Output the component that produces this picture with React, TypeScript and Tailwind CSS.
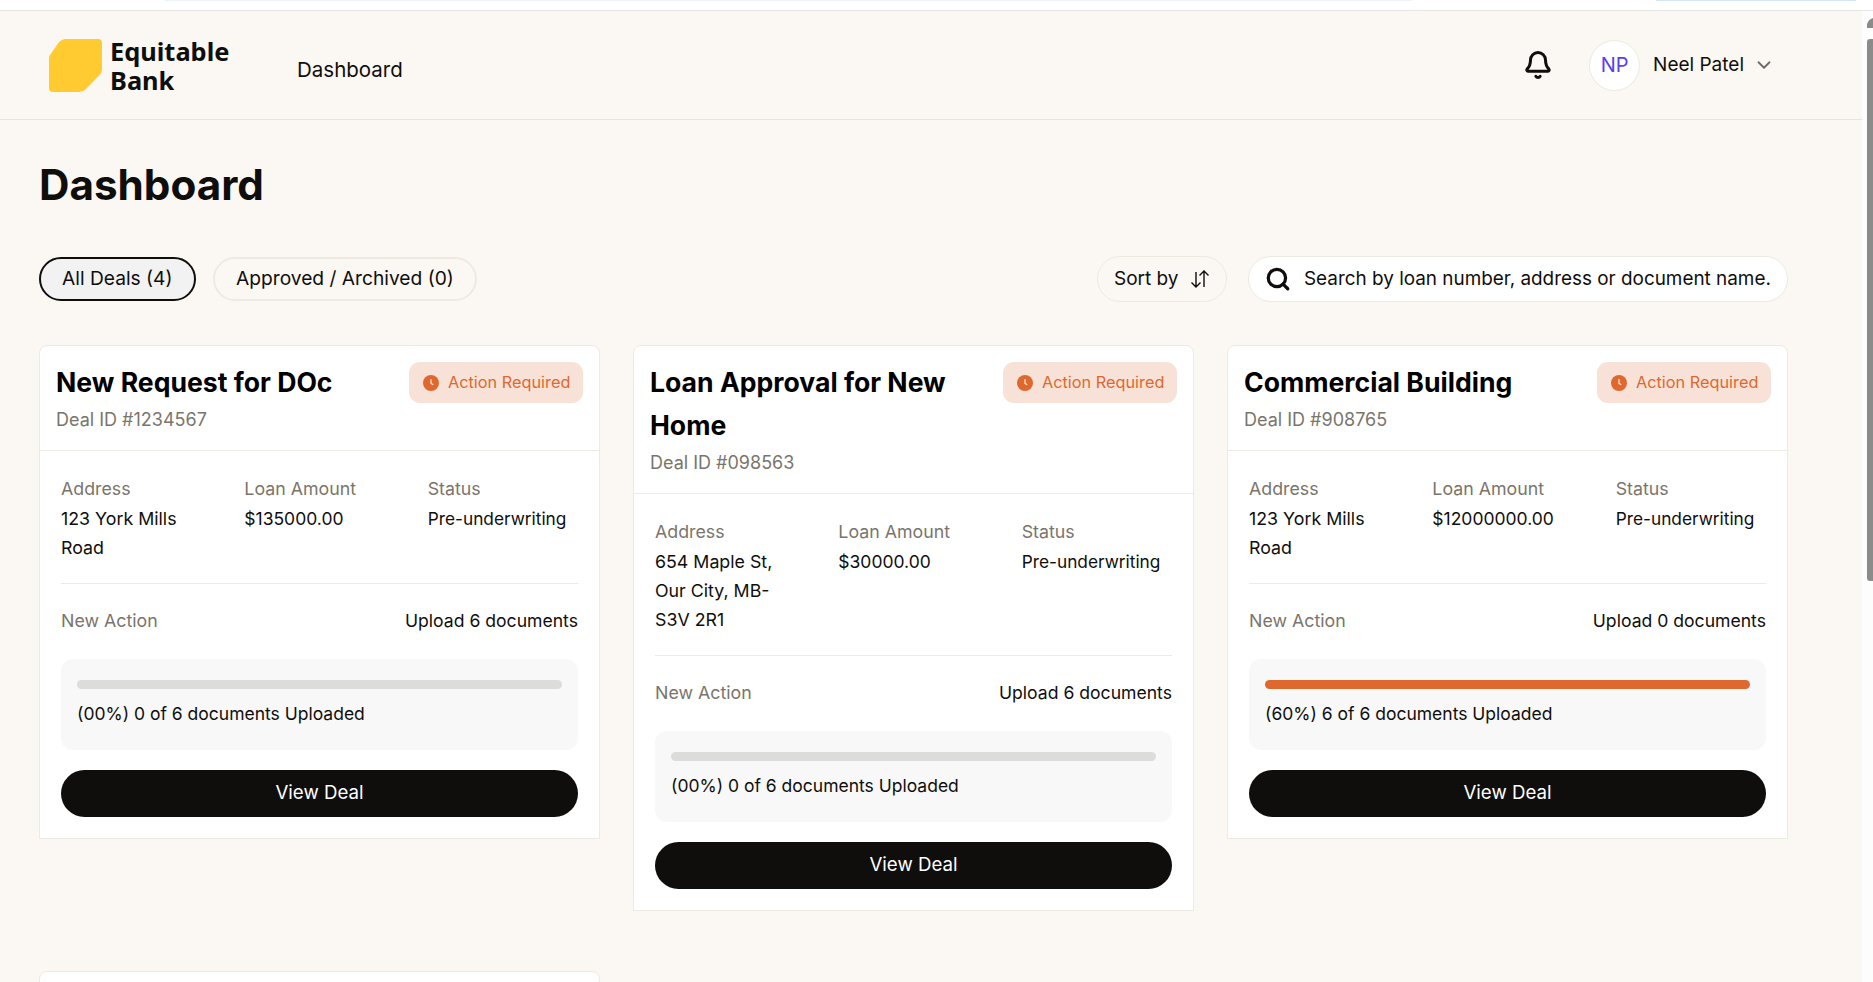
import { Bell, ChevronDown, Search } from "lucide-react";

const font = "font-['Inter',sans-serif]";

const deals = [
  {
    title: "New Request for DOc",
    id: "Deal ID #1234567",
    address: "123 York Mills Road",
    amount: "$135000.00",
    action: "Upload 6 documents",
    percent: "(00%) 0 of 6 documents Uploaded",
    done: false,
  },
  {
    title: "Loan Approval for New Home",
    id: "Deal ID #098563",
    address: "654 Maple St, Our City, MB-S3V 2R1",
    amount: "$30000.00",
    action: "Upload 6 documents",
    percent: "(00%) 0 of 6 documents Uploaded",
    done: false,
  },
  {
    title: "Commercial Building",
    id: "Deal ID #908765",
    address: "123 York Mills Road",
    amount: "$12000000.00",
    action: "Upload 0 documents",
    percent: "(60%) 6 of 6 documents Uploaded",
    done: true,
  },
];

function ClockDot() {
  return (
    <svg viewBox="0 0 16 16" className="h-4 w-4 shrink-0">
      <circle cx="8" cy="8" r="8" fill="#DF682F" />
      <path d="M8 4v4.4l2.2 1.4" fill="none" stroke="#F8E2D7" strokeWidth="1.3" />
    </svg>
  );
}

function SortIcon() {
  return (
    <svg viewBox="0 0 24 24" className="h-[24px] w-[24px]" fill="none" stroke="#0f0e0c" strokeWidth="1.4">
      <path d="M8 5v15M3.5 15.5 8 20l4.5-4.5" />
      <path d="M16 20V4M11.500 8.500 16 4l4.500 4.500" />
    </svg>
  );
}

function DealCard({ deal }: { deal: (typeof deals)[number] }) {
  return (
    <div className="rounded-t-[8px] border border-[#EDEAE2] bg-white">
      <div className="flex items-start justify-between border-b border-[#EDEAE2] p-[16px]">
        <div className="w-[330px]">
          <div className="-mt-[1px] text-[26.600px] font-bold leading-[43px] text-black">{deal.title}</div>
          <div className="mt-[2px] text-[18px] leading-[28px] text-[#7a756c]">{deal.id}</div>
        </div>
        <div className="flex h-[41px] w-[174px] shrink-0 items-center gap-[9px] rounded-[11px] bg-[#F8E2D7] pl-[14px]">
          <ClockDot />
          <span className="text-[16.3px] text-[#DF682F]">Action Required</span>
        </div>
      </div>
      <div className="px-[21px] pb-[21px] pt-[23px]">
        <div className="grid grid-cols-3 gap-x-[33px] border-b border-[#EDEAE2] pb-[21px]">
          <div className="pr-[8px]">
            <div className="text-[17.8px] leading-[30px] text-[#7a756c]">Address</div>
            <div className="text-[17.8px] leading-[29px] text-[#0f0e0c]">{deal.address}</div>
          </div>
          <div>
            <div className="text-[17.8px] leading-[30px] text-[#7a756c]">Loan Amount</div>
            <div className="text-[17.5px] leading-[29px] text-[#0f0e0c]">{deal.amount}</div>
          </div>
          <div>
            <div className="text-[17.8px] leading-[30px] text-[#7a756c]">Status</div>
            <div className="text-[17.3px] leading-[29px] text-[#0f0e0c]">Pre-underwriting</div>
          </div>
        </div>
        <div className="flex items-center justify-between pb-[24px] pt-[22px] leading-[29px]">
          <span className="text-[17.8px] text-[#7a756c]">New Action</span>
          <span className="text-[17.6px] text-[#0f0e0c]">{deal.action}</span>
        </div>
        <div className="rounded-[12px] bg-[#F8F8F8] px-[16px] pb-[22px] pt-[21px]">
          <div className={`h-[9px] rounded-full ${deal.done ? "bg-[#DF682F]" : "bg-[#DCDCDA]"}`} />
          <div className="mt-[10px] text-[17.5px] leading-[29px] text-[#0f0e0c]">{deal.percent}</div>
        </div>
        <button className="mt-[20px] h-[47px] w-full rounded-full bg-[#0f0e0c] text-[18.7px] text-white">View Deal</button>
      </div>
    </div>
  );
}

export default function App() {
  return (
    <div className={`${font} flex h-[982px] flex-col overflow-hidden bg-white text-[#0f0e0c]`}>
      <div className="flex h-[11px] shrink-0 items-start border-b border-[#E5E5E5] bg-white">
        <div className="ml-[165px] h-[1px] w-[1247px] bg-[#EEF3FB]" />
        <div className="ml-[244px] h-[1px] w-[200px] bg-[#D5E4FB]" />
      </div>
      <div className="flex min-h-0 flex-1">
        <div className="min-w-0 flex-1 overflow-hidden bg-[#FBF8F3]">
          <header className="flex h-[109px] items-center justify-between border-b border-[#E5E5E5] pl-[49px] pr-[87px]">
            <div className="flex items-center">
              <svg viewBox="0 0 53 53" className="h-[53px] w-[53px]">
                <path d="M16 0H49a4 4 0 0 1 4 4V30a8 8 0 0 1-2.5 6L37 50a10 10 0 0 1-7 3H4a4 4 0 0 1-4-4V20a8 8 0 0 1 2.5-6L10 3a10 10 0 0 1 6-3Z" fill="#FFCB30" />
              </svg>
              <div className="ml-[8px] mt-[2px] w-[130px] font-['Noto_Sans',sans-serif] text-[25.4px] font-bold leading-[29px]">Equitable Bank</div>
              <div className="ml-[57px] mt-[10px] text-[20.5px]">Dashboard</div>
            </div>
            <div className="flex items-center">
              <Bell className="h-[30px] w-[30px]" strokeWidth={2.4} />
              <div className="ml-[36px] flex h-[51px] w-[51px] items-center justify-center rounded-full border border-[#EDEAE2] bg-white text-[20px] text-[#5B3FEF]">NP</div>
              <span className="ml-[13px] text-[19px]">Neel Patel</span>
              <ChevronDown className="ml-[9px] h-[22px] w-[22px] text-[#6b6b6b]" strokeWidth={2} />
            </div>
          </header>
          <main className="pl-[39px] pr-[74px]">
            <h1 className="mt-[38px] text-[42.2px] font-bold leading-[54px]">Dashboard</h1>
            <div className="mt-[44px] flex items-center justify-between">
              <div className="flex gap-[17px]">
                <div className="flex h-[44px] items-center rounded-full border-2 border-[#0f0e0c] bg-[#F2F2F2] px-[21px] pb-[2px] text-[19.2px]">All Deals (4)</div>
                <div className="flex h-[44px] items-center rounded-full border-2 border-[#EDEAE2] px-[21.5px] pb-[2px] text-[19.2px]">Approved / Archived (0)</div>
              </div>
              <div className="flex gap-[21px]">
                <div className="flex h-[46px] w-[130px] items-center gap-[9px] rounded-full border border-[#EDEAE2] pl-[16px] text-[19px]">
                  Sort by
                  <SortIcon />
                </div>
                <div className="flex h-[46px] w-[540px] items-center rounded-full border border-[#EDEAE2] bg-white pl-[16px] text-[18.9px]">
                  <Search className="h-[26px] w-[26px]" strokeWidth={3} />
                  <span className="ml-[13px]">Search by loan number, address or document name.</span>
                </div>
              </div>
            </div>
            <div className="mt-[43px] grid grid-cols-3 items-start gap-x-[33px] gap-y-[60px]">
              {deals.map((deal) => (
                <DealCard key={deal.id} deal={deal} />
              ))}
              <div className="h-[60px] rounded-t-[8px] border border-[#EDEAE2] bg-white" />
            </div>
          </main>
        </div>
        <div className="flex w-[11px] shrink-0 flex-col bg-[#FDFDFD] pl-[5px]">
          <svg viewBox="0 0 6 10" className="mt-[7px] h-[10px] w-[6px] shrink-0">
            <path d="M6 0V10H0V6Q1.500 1.500 6 0Z" fill="#8B8B8B" />
          </svg>
          <div className="mt-[11px] h-[542px] w-[6px] rounded-l-[3px] bg-[#8B8B8B]" />
        </div>
      </div>
    </div>
  );
}
